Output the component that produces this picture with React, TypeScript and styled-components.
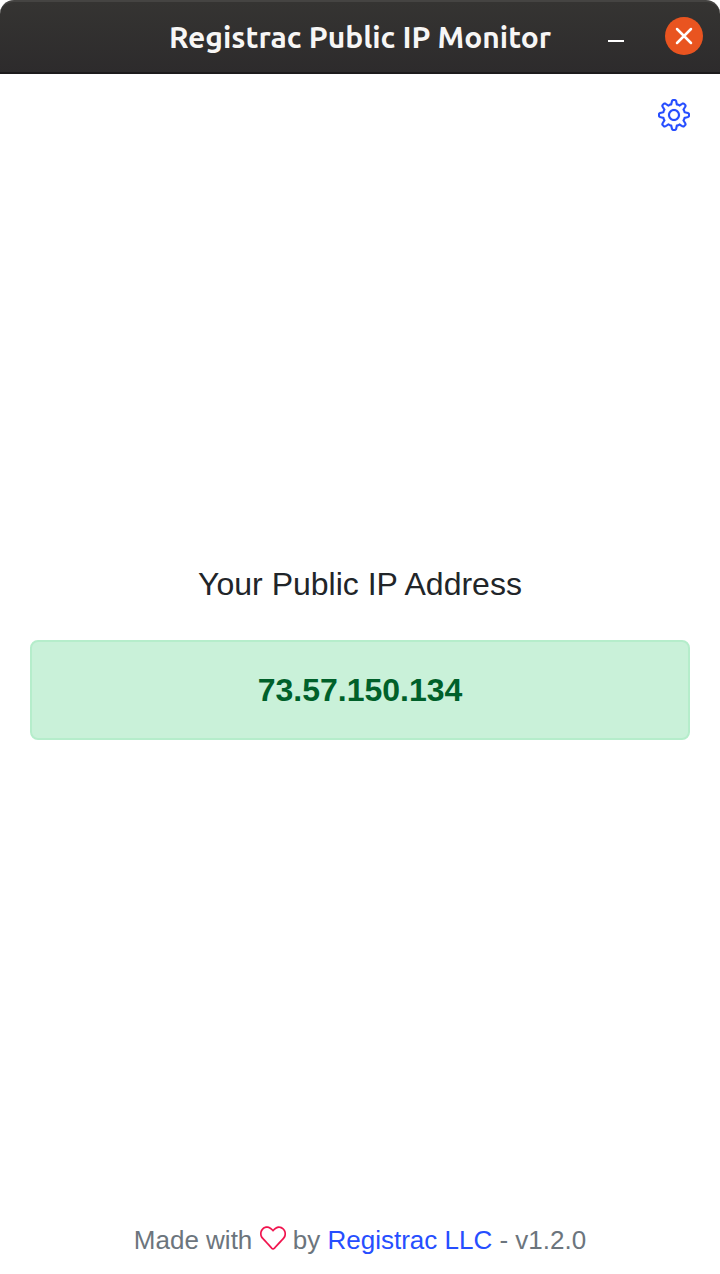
import React from "react";
import styled, { createGlobalStyle } from "styled-components";
import { SlSettings, SlHeart } from "react-icons/sl";

const GlobalStyle = createGlobalStyle`
  *, *::before, *::after { box-sizing: border-box; }
  body {
    margin: 0;
    background: #ffffff;
    color: #212529;
    font-family: "Liberation Sans", Arial, sans-serif;
  }
`;

const Window = styled.div`
  display: flex;
  flex-direction: column;
  min-height: 100vh;
`;

const TitleBar = styled.header`
  display: grid;
  grid-template-columns: 1fr auto 1fr;
  align-items: center;
  height: 74px;
  padding: 0 17px 2px;
  border-radius: 14px 14px 0 0;
  border-top: 2px solid #454442;
  border-bottom: 2px solid #1d1b1c;
  background: linear-gradient(#353432, #2d2b2c);
`;

const Title = styled.h1`
  grid-column: 2;
  margin: 0;
  padding-top: 2px;
  color: #f7f6f5;
  font: 700 30px/40px Ubuntu, "Noto Sans", sans-serif;
  white-space: nowrap;
`;

const Controls = styled.div`
  display: flex;
  justify-content: flex-end;
  align-items: center;
  gap: 30px;
`;

const WindowButton = styled.button<{ $round?: boolean }>`
  display: flex;
  padding: 0;
  border: 0;
  border-radius: ${(p) => (p.$round ? "50%" : "0")};
  background: ${(p) => (p.$round ? "#e95420" : "transparent")};
  color: #ffffff;
  cursor: pointer;
`;

const Toolbar = styled.div`
  display: flex;
  justify-content: flex-end;
  padding: 25px 30px 0;
`;

const IconButton = styled.button`
  display: flex;
  padding: 0;
  border: 0;
  background: transparent;
  color: #264eff;
  cursor: pointer;
`;

const Gear = styled(SlSettings)`
  stroke: currentColor;
  stroke-width: 4px;
`;

const Main = styled.main`
  display: flex;
  flex: 1;
  flex-direction: column;
  justify-content: center;
  gap: 32px;
  padding: 0 30px 52px;
  text-align: center;
`;

const Heading = styled.h2`
  margin: 0;
  font-size: 32px;
  font-weight: 400;
  line-height: 48px;
`;

const Address = styled.output`
  display: block;
  padding: 24px;
  border: 2px solid #b5edcb;
  border-radius: 8px;
  background: #c9f1d9;
  color: #00602a;
  font-size: 32px;
  font-weight: 700;
  line-height: 48px;
`;

const Footer = styled.footer`
  padding: 0 30px 14px;
  color: #6c757d;
  font-size: 26px;
  line-height: 40px;
  text-align: center;
`;

const Heart = styled(SlHeart)`
  color: #f0134d;
  stroke: currentColor;
  stroke-width: 4px;
  vertical-align: -2px;
`;

const Link = styled.a`
  color: #264eff;
  text-decoration: none;
`;

export default function App() {
  return (
    <>
      <GlobalStyle />
      <Window>
        <TitleBar>
          <Title>Registrac Public IP Monitor</Title>
          <Controls>
            <WindowButton aria-label="Minimize">
              <svg width="38" height="38" viewBox="0 0 38 38">
                <path d="M11 24h16" stroke="currentColor" strokeWidth="2" />
              </svg>
            </WindowButton>
            <WindowButton $round aria-label="Close">
              <svg width="38" height="38" viewBox="0 0 38 38">
                <path d="M12 12l14 14M26 12l-14 14" stroke="currentColor" strokeWidth="2.5" strokeLinecap="round" />
              </svg>
            </WindowButton>
          </Controls>
        </TitleBar>
        <Toolbar>
          <IconButton aria-label="Settings">
            <Gear size={32} />
          </IconButton>
        </Toolbar>
        <Main>
          <Heading>Your Public IP Address</Heading>
          <Address>73.57.150.134</Address>
        </Main>
        <Footer>
          Made with <Heart size={26} aria-label="love" /> by <Link href="#registrac">Registrac LLC</Link> - v1.2.0
        </Footer>
      </Window>
    </>
  );
}
